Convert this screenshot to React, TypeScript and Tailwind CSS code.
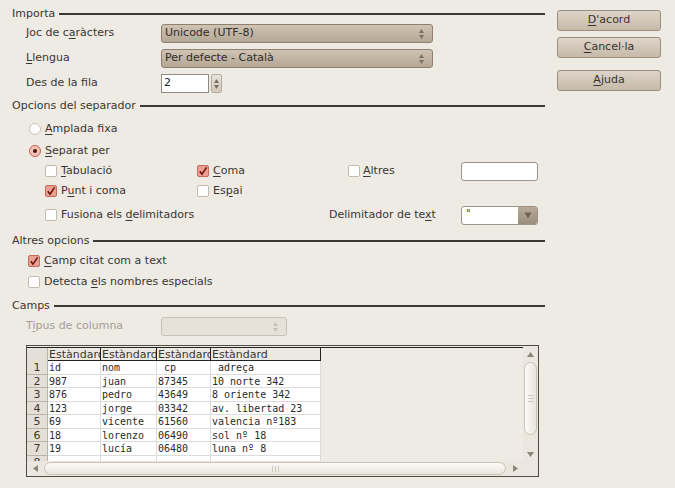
import React from "react";

const U = ({ c }: { c: string }) => (
  <span className="underline underline-offset-2 decoration-1">{c}</span>
);

const Heading = ({ children, mt }: { children: React.ReactNode; mt: string }) => (
  <div className={`flex items-center h-[16px] pl-[12px] ${mt}`}>
    <span>{children}</span>
    <div className="flex-1 h-[2px] bg-[#3b3935] ml-[4px]" />
  </div>
);

const Check = ({ on }: { on?: boolean }) => (
  <span
    className={`w-[12px] h-[12px] rounded-[2px] border flex items-center justify-center shrink-0 ${
      on ? "bg-[#ec9f93] border-[#c46c5e]" : "bg-white border-[#c3baad]"
    }`}
  >
    {on && (
      <svg width="10" height="10" viewBox="0 0 10 10">
        <path d="M1.8 5.2 L4 8.2 L8.6 1.4" stroke="#6e1409" strokeWidth="1.6" fill="none" />
      </svg>
    )}
  </span>
);

const Radio = ({ on }: { on?: boolean }) => (
  <span
    className={`w-[12px] h-[12px] rounded-full border flex items-center justify-center shrink-0 ${
      on ? "bg-[#f4c2b8] border-[#c8604f]" : "bg-white border-[#c9c0b3]"
    }`}
  >
    {on && <span className="w-[4px] h-[4px] rounded-full bg-[#4a1610]" />}
  </span>
);

const UpDown = ({ faint }: { faint?: boolean }) => (
  <svg width="7" height="12" viewBox="0 0 7 12">
    <path d="M3.5 1 L6 5 L1 5 Z" fill={faint ? "#c9c1b6" : "#7b7062"} />
    <path d="M3.5 11 L6 7 L1 7 Z" fill={faint ? "#c9c1b6" : "#7b7062"} />
  </svg>
);

const Combo = ({ text }: { text: string }) => (
  <div className="w-[272px] h-[19px] rounded-[3px] border border-[#8f806e] bg-gradient-to-b from-[#cfc3b3] to-[#b5a795] flex items-center pl-[3px] pr-[7px] text-[#2f2b26]">
    <span className="flex-1">{text}</span>
    <UpDown />
  </div>
);

const Btn = ({ children, mt }: { children: React.ReactNode; mt: string }) => (
  <div
    className={`w-[104px] h-[21px] rounded-[3px] border border-[#9c8e7c] bg-gradient-to-b from-[#ddd5c9] to-[#c6baa9] flex items-center justify-center text-[#38332d] ${mt}`}
  >
    {children}
  </div>
);

const cols = [53, 56, 54, 110];
const rows = [
  ["id", "nom", " cp", " adreça"],
  ["987", "juan", "87345", "10 norte 342"],
  ["876", "pedro", "43649", "8 oriente 342"],
  ["123", "jorge", "03342", "av. libertad 23"],
  ["69", "vicente", "61560", "valencia nº183"],
  ["18", "lorenzo", "06490", "sol nº 18"],
  ["19", "lucía", "06480", "luna nº 8"],
  ["", "", "", ""],
];

const Table = () => (
  <div className="flex flex-col font-['DejaVu_Sans_Mono'] text-[10px]">
    <div className="flex h-[14px] border-t border-[#222]">
      <div className="w-[21px] bg-[#e4e0d9] border-r border-[#b9b3aa]" />
      {cols.map((w, i) => (
        <div
          key={i}
          style={{ width: w }}
          className="h-full border-r border-b border-[#222] bg-[#ece9e3] overflow-hidden whitespace-nowrap font-['DejaVu_Sans'] text-[11px] leading-[13px] pl-[1px]"
        >
          Estàndard
        </div>
      ))}
    </div>
    {rows.map((r, ri) => (
      <div key={ri} className="flex h-[13.5px] leading-[13px]">
        <div className="w-[21px] bg-[#e4e0d9] border-r border-b border-[#b9b3aa] text-center text-[#3a3630] font-['DejaVu_Sans'] text-[11px]">
          {ri + 1}
        </div>
        {r.map((c, ci) => (
          <div
            key={ci}
            style={{ width: cols[ci] }}
            className="bg-white border-r border-b border-[#dcdcdc] whitespace-pre overflow-hidden pl-[1px] text-[#2b2b2b]"
          >
            {c}
          </div>
        ))}
      </div>
    ))}
  </div>
);

export default function App() {
  return (
    <div className="w-[675px] h-[488px] bg-[#eeeae4] flex font-['DejaVu_Sans'] text-[11px] text-[#3a3732] overflow-hidden">
      <div className="w-[545px] flex flex-col pt-[6px]">
        <Heading mt="">Importa</Heading>
        <div className="flex items-center h-[19px] mt-[2px] pl-[26px]">
          <span className="w-[135px]">Joc de c<U c="a" />ràcters</span>
          <Combo text="Unicode (UTF-8)" />
        </div>
        <div className="flex items-center h-[19px] mt-[6px] pl-[26px]">
          <span className="w-[135px]"><U c="L" />lengua</span>
          <Combo text="Per defecte - Català" />
        </div>
        <div className="flex items-center h-[19px] mt-[6px] pl-[26px]">
          <span className="w-[135px]">Des de la f<U c="i" />la</span>
          <div className="w-[48px] h-[19px] border border-[#8f8a82] bg-white pl-[2px] flex items-center text-[#222]">2</div>
          <div className="ml-[2px] w-[11px] h-[19px] rounded-[2px] border border-[#b7ab9b] bg-gradient-to-b from-[#e8e2d8] to-[#d3c9bb] flex items-center justify-center">
            <UpDown />
          </div>
        </div>

        <Heading mt="mt-[5px]">Opcions del separador</Heading>
        <div className="flex items-center h-[18px] mt-[6px] pl-[29px] gap-[4px]">
          <Radio />
          <span><U c="A" />mplada fixa</span>
        </div>
        <div className="flex items-center h-[18px] mt-[4px] pl-[29px] gap-[4px]">
          <Radio on />
          <span><U c="S" />eparat per</span>
        </div>
        <div className="flex items-center h-[18px] mt-[2px] pl-[45px]">
          <div className="w-[152px] flex items-center gap-[4px]">
            <Check />
            <span><U c="T" />abulació</span>
          </div>
          <div className="w-[151px] flex items-center gap-[4px]">
            <Check on />
            <span><U c="C" />oma</span>
          </div>
          <div className="w-[113px] flex items-center gap-[3px]">
            <Check />
            <span><U c="A" />ltres</span>
          </div>
          <div className="w-[77px] h-[19px] rounded-[3px] border border-[#9c9488] bg-white" />
        </div>
        <div className="flex items-center h-[18px] mt-[2px] pl-[45px]">
          <div className="w-[152px] flex items-center gap-[4px]">
            <Check on />
            <span>P<U c="u" />nt i coma</span>
          </div>
          <div className="w-[151px] flex items-center gap-[4px]">
            <Check />
            <span>Es<U c="p" />ai</span>
          </div>
        </div>
        <div className="flex items-center h-[18px] mt-[6px] pl-[45px]">
          <div className="w-[284px] flex items-center gap-[4px]">
            <Check />
            <span>Fusiona els <U c="d" />elimitadors</span>
          </div>
          <span className="w-[132px]">Delimitador de te<U c="x" />t</span>
          <div className="w-[77px] h-[19px] rounded-[3px] border border-[#9c9488] bg-white flex overflow-hidden">
            <span className="flex-1 pl-[4px] text-[10px] leading-[14px] text-[#4a4640]">"</span>
            <div className="w-[19px] h-full bg-gradient-to-b from-[#b7aa99] to-[#9c8e7c] flex items-center justify-center">
              <svg width="8" height="7" viewBox="0 0 8 7">
                <path d="M0.5 0.5 L7.5 0.5 L4 6.5 Z" fill="#6d6356" />
              </svg>
            </div>
          </div>
        </div>

        <Heading mt="mt-[9px]">Altres opcions</Heading>
        <div className="flex items-center h-[18px] mt-[3px] pl-[28px] gap-[4px]">
          <Check on />
          <span><U c="C" />amp citat com a text</span>
        </div>
        <div className="flex items-center h-[18px] mt-[3px] pl-[28px] gap-[4px]">
          <Check />
          <span>Detecta <U c="e" />ls nombres especials</span>
        </div>

        <Heading mt="mt-[7px]">Camps</Heading>
        <div className="flex items-center h-[19px] mt-[3px] pl-[26px]">
          <span className="w-[135px] text-[#a49e95]">T<U c="i" />pus de columna</span>
          <div className="w-[126px] h-[19px] rounded-[3px] border border-[#c9c1b5] bg-[#e6e1d9] flex items-center justify-end pr-[7px]">
            <UpDown faint />
          </div>
        </div>

        <div className="ml-[26px] mt-[9px] w-[513px] h-[132px] border border-[#4f4b45] flex flex-col">
          <div className="flex flex-1 min-h-0">
            <div className="flex-1 overflow-hidden pt-[1px]">
              <Table />
            </div>
            <div className="w-[15px] bg-[#ebe7e0] flex flex-col items-center pt-[6px] pb-[4px]">
              <svg width="7" height="5" viewBox="0 0 7 5">
                <path d="M3.5 0 L7 5 L0 5 Z" fill="#8d857a" />
              </svg>
              <div className="mt-[5px] w-[13px] h-[73px] rounded-full border border-[#cbc3b7] bg-gradient-to-r from-[#fbfaf8] to-[#e9e5de] flex flex-col items-center justify-center gap-[2px]">
                <div className="w-[6px] h-px bg-[#cfc8bd]" />
                <div className="w-[6px] h-px bg-[#cfc8bd]" />
                <div className="w-[6px] h-px bg-[#cfc8bd]" />
              </div>
              <div className="flex-1" />
              <svg width="7" height="5" viewBox="0 0 7 5">
                <path d="M0 0 L7 0 L3.5 5 Z" fill="#8d857a" />
              </svg>
            </div>
          </div>
          <div className="h-[15px] flex">
            <div className="flex-1 bg-[#ebe7e0] flex items-center pl-[6px] pr-[5px]">
              <svg width="5" height="7" viewBox="0 0 5 7">
                <path d="M0 3.5 L5 0 L5 7 Z" fill="#8d857a" />
              </svg>
              <div className="ml-[6px] flex-1 h-[13px] rounded-full border border-[#cbc3b7] bg-gradient-to-b from-[#fbfaf8] to-[#e9e5de] flex items-center justify-center gap-[2px]">
                <div className="w-px h-[6px] bg-[#cfc8bd]" />
                <div className="w-px h-[6px] bg-[#cfc8bd]" />
                <div className="w-px h-[6px] bg-[#cfc8bd]" />
              </div>
              <svg className="ml-[7px]" width="5" height="7" viewBox="0 0 5 7">
                <path d="M5 3.5 L0 0 L0 7 Z" fill="#8d857a" />
              </svg>
            </div>
            <div className="w-[15px] bg-[#ebe7e0]" />
          </div>
        </div>
      </div>

      <div className="ml-[12px] pt-[10px] flex flex-col">
        <Btn mt=""><span><U c="D" />'acord</span></Btn>
        <Btn mt="mt-[6px]"><span><U c="C" />ancel·la</span></Btn>
        <Btn mt="mt-[12px]"><span><U c="A" />juda</span></Btn>
      </div>
    </div>
  );
}
